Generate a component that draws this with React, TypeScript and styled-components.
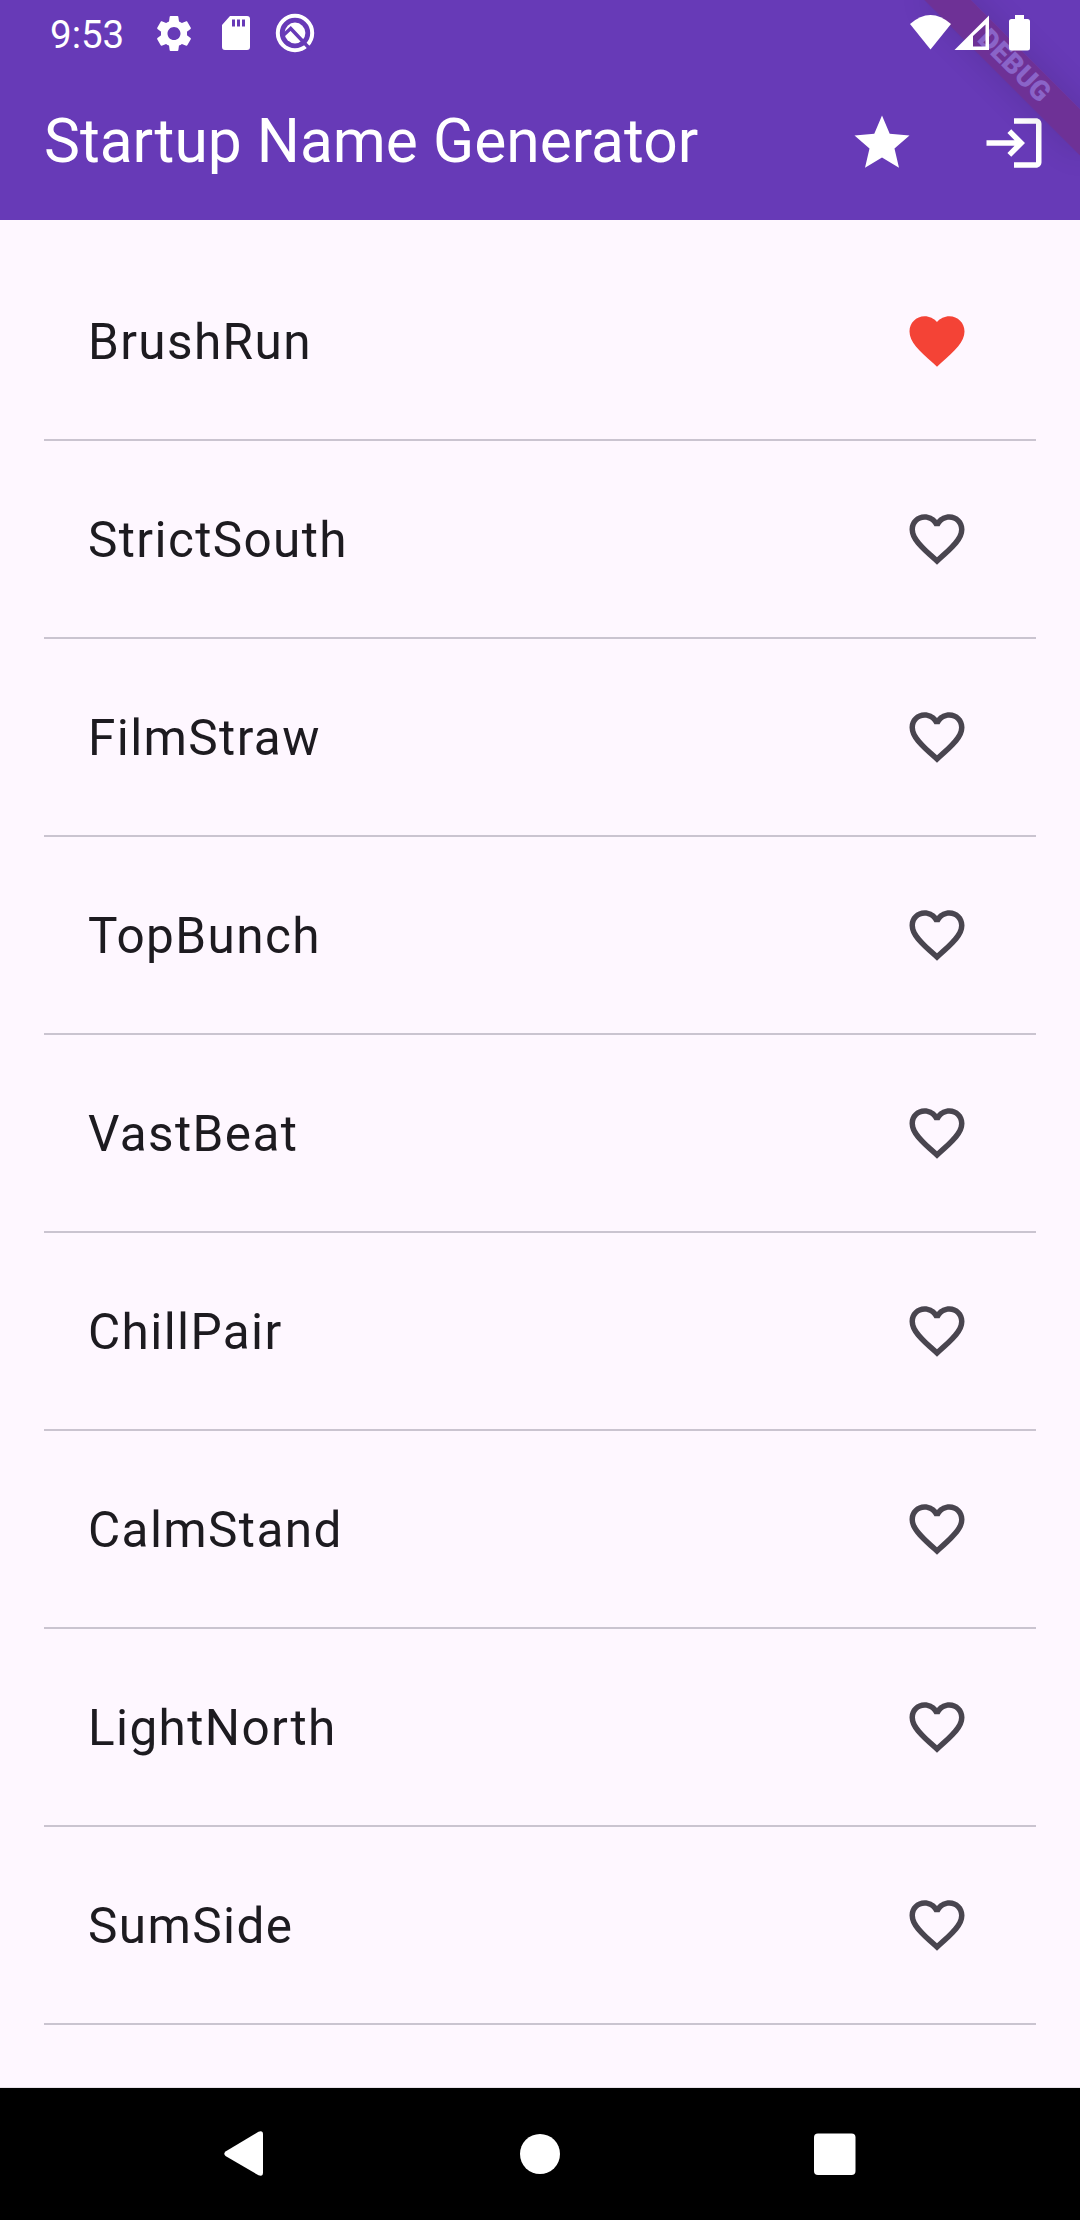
import React from "react";
import styled, { createGlobalStyle } from "styled-components";

const GlobalStyle = createGlobalStyle`
  * { box-sizing: border-box; }
  html, body { margin: 0; padding: 0; background: #fef7ff; }
  body { font-family: Roboto, "Noto Sans", sans-serif; font-kerning: normal; }
`;

const Screen = styled.div`
  position: relative;
  display: flex;
  flex-direction: column;
  width: 1080px;
  height: 2220px;
  overflow: hidden;
  background: #fef7ff;
`;

const Header = styled.header`
  background: #673ab7;
  color: #fff;
  height: 220px;
  flex: none;
`;

const StatusBar = styled.div`
  position: relative;
  z-index: 2;
  display: flex;
  align-items: center;
  justify-content: space-between;
  height: 66px;
  padding: 0 49px 0 50px;
`;

const StatusGroup = styled.div<{ $gap: number }>`
  display: flex;
  align-items: center;
  gap: ${(p) => p.$gap}px;
`;

const Clock = styled.span`
  font-size: 38.5px;
  line-height: 64px;
  width: 75px;
  margin-right: 13px;
  padding-top: 4px;
`;

const Glyph = styled.svg`
  display: block;
  flex: none;
`;

const AppBar = styled.div`
  display: flex;
  align-items: center;
  height: 154px;
  padding: 0 33px 0 44px;
`;

const Title = styled.h1`
  flex: 1;
  margin: 0;
  padding-bottom: 4px;
  font-size: 60.5px;
  font-weight: 400;
  line-height: 77px;
  white-space: nowrap;
`;

const Actions = styled.div`
  display: flex;
  gap: 66px;
`;

const Banner = styled.div`
  position: absolute;
  z-index: 1;
  top: 0;
  left: 1080px;
  width: 0;
  height: 0;
  transform: rotate(45deg);
`;

const BannerStrip = styled.div`
  position: absolute;
  left: -110px;
  top: 77px;
  width: 220px;
  height: 33px;
  background: rgba(128, 28, 64, 0.28);
  box-shadow: 0 0 33px rgba(0, 0, 0, 0.12);
  color: #8a64c8;
  font-size: 28px;
  font-weight: 900;
  line-height: 32px;
  text-align: center;
`;

const List = styled.ul`
  flex: 1;
  margin: 0;
  padding: 44px 44px 0;
  list-style: none;
`;

const Row = styled.li`
  display: flex;
  align-items: center;
  justify-content: space-between;
  height: 154px;
  padding: 0 66px 0 44px;
`;

const Divider = styled.li`
  height: 44px;
  padding-top: 21px;
  &::before {
    content: "";
    display: block;
    height: 2px;
    background: #cac4d0;
  }
`;

const Name = styled.span`
  padding-top: 2px;
  font-size: 49.5px;
  line-height: 74px;
  letter-spacing: 1.375px;
  color: #1d1b20;
`;

const NavBar = styled.nav`
  flex: none;
  display: flex;
  align-items: center;
  justify-content: space-between;
  height: 133px;
  padding: 0 224px;
  border-top: 1px solid #e8e2ea;
  background: #000;
`;

const HEART =
  "M12 21.35l-1.45-1.32C5.4 15.36 2 12.28 2 8.5 2 5.42 4.42 3 7.5 3c1.74 0 3.41.81 4.5 2.09C13.09 3.81 14.76 3 16.5 3 19.58 3 22 5.42 22 8.5c0 3.78-3.4 6.86-8.55 11.54L12 21.35z";
const HEART_OUTLINE =
  "M16.5 3c-1.74 0-3.41.81-4.5 2.09C10.91 3.81 9.24 3 7.5 3 4.42 3 2 5.42 2 8.5c0 3.78 3.4 6.86 8.55 11.54L12 21.35l1.45-1.32C18.6 15.36 22 12.28 22 8.5 22 5.42 19.58 3 16.5 3zm-4.4 15.55l-.1.1-.1-.1C7.14 14.24 4 11.39 4 8.5 4 6.5 5.5 5 7.5 5c1.54 0 3.04.99 3.57 2.36h1.87C13.46 5.99 14.96 5 16.5 5c2 0 3.5 1.5 3.5 3.5 0 2.89-3.14 5.74-7.9 10.05z";
const STAR =
  "M12 17.27L18.18 21l-1.64-7.03L22 9.24l-7.19-.61L12 2 9.19 8.63 2 9.24l5.46 4.73L5.82 21z";
const LOGIN =
  "M11 7L9.6 8.4l2.6 2.6H2v2h10.2l-2.6 2.6L11 17l5-5-5-5zm9 12h-8v2h8c1.1 0 2-.9 2-2V5c0-1.1-.9-2-2-2h-8v2h8v14z";
const GEAR =
  "M19.14 12.94c.04-.3.06-.61.06-.94 0-.32-.02-.64-.07-.94l2.03-1.58c.18-.14.23-.41.12-.61l-1.92-3.32c-.12-.22-.37-.29-.59-.22l-2.39.96c-.5-.38-1.03-.7-1.62-.94l-.36-2.54c-.04-.24-.24-.41-.48-.41h-3.84c-.24 0-.43.17-.47.41l-.36 2.54c-.59.24-1.13.57-1.62.94l-2.39-.96c-.22-.08-.47 0-.59.22L2.74 8.87c-.12.21-.08.47.12.61l2.03 1.58c-.05.3-.09.63-.09.94s.02.64.07.94l-2.03 1.58c-.18.14-.23.41-.12.61l1.92 3.32c.12.22.37.29.59.22l2.39-.96c.5.38 1.03.7 1.62.94l.36 2.54c.05.24.24.41.48.41h3.84c.24 0 .44-.17.47-.41l.36-2.54c.59-.24 1.13-.56 1.62-.94l2.39.96c.22.08.47 0 .59-.22l1.92-3.32c.12-.22.07-.47-.12-.61l-2.01-1.58zM12 15.6c-1.98 0-3.6-1.62-3.6-3.6s1.62-3.6 3.6-3.6 3.6 1.62 3.6 3.6-1.62 3.6-3.6 3.6z";

const MaterialIcon = ({ d, color = "#fff" }: { d: string; color?: string }) => (
  <Glyph width="66" height="66" viewBox="0 0 24 24" fill={color}>
    <path d={d} />
  </Glyph>
);

const names = [
  "BrushRun",
  "StrictSouth",
  "FilmStraw",
  "TopBunch",
  "VastBeat",
  "ChillPair",
  "CalmStand",
  "LightNorth",
  "SumSide",
];

export default function App() {
  const saved = new Set(["BrushRun"]);
  return (
    <Screen>
      <GlobalStyle />
      <Header>
        <StatusBar>
          <StatusGroup $gap={19}>
            <Clock>9:53</Clock>
            <Glyph width="34" height="35" viewBox="2.6 2.4 18.8 19.2" preserveAspectRatio="none" fill="#fff">
              <path d={GEAR} />
            </Glyph>
            <Glyph width="46" height="36" viewBox="0 0 46 36" fill="#fff">
              <path
                fillRule="evenodd"
                d="M20 1H37a3 3 0 0 1 3 3V32a3 3 0 0 1-3 3H15a3 3 0 0 1-3-3V10zM22 4.500V11.500H25V4.500zM27 4.500V11.500H30V4.500zM32 4.500V11.500H35V4.500z"
              />
            </Glyph>
            <Glyph width="40" height="40" viewBox="0 0 40 40">
              <circle cx="20" cy="20" r="17.200" fill="none" stroke="#fff" strokeWidth="4" />
              <circle cx="20" cy="20" r="10.400" fill="#fff" />
              <path d="M7 23.500L15.700 15.500L36 37" fill="none" stroke="#673ab7" strokeWidth="3.400" />
            </Glyph>
          </StatusGroup>
          <Glyph width="121" height="40" viewBox="0 0 121 40" fill="#fff">
            <path d="M0 11Q20.500 -7 41 11L20.500 36.500Z" />
            <path fillRule="evenodd" d="M44.500 37L79 2.500V37ZM63 33.500H75.500V11.500L63 23Z" />
            <path d="M105 2h9v4h3.500a2.500 2.500 0 0 1 2.500 2.500V35a2.500 2.500 0 0 1-2.500 2.500H101.500a2.500 2.500 0 0 1-2.500-2.500V8.500a2.500 2.500 0 0 1 2.500-2.500H105z" />
          </Glyph>
        </StatusBar>
        <AppBar>
          <Title>Startup Name Generator</Title>
          <Actions>
            <MaterialIcon d={STAR} />
            <MaterialIcon d={LOGIN} />
          </Actions>
        </AppBar>
      </Header>
      <Banner>
        <BannerStrip>DEBUG</BannerStrip>
      </Banner>
      <List>
        {names.map((name) => (
          <React.Fragment key={name}>
            <Row>
              <Name>{name}</Name>
              {saved.has(name) ? (
                <MaterialIcon d={HEART} color="#f44336" />
              ) : (
                <MaterialIcon d={HEART_OUTLINE} color="#49454f" />
              )}
            </Row>
            <Divider />
          </React.Fragment>
        ))}
      </List>
      <NavBar>
        <Glyph width="42" height="46" viewBox="0 0 42 46" fill="#fff">
          <path d="M1.500 20.500L34.500 0.700Q39 -1 39 3.500V41.500Q39 46 34.500 44.300L1.500 25Q-1 22.800 1.500 20.500Z" />
        </Glyph>
        <Glyph width="40" height="40" viewBox="0 0 40 40" fill="#fff">
          <circle cx="20" cy="20" r="20" />
        </Glyph>
        <Glyph width="42" height="42" viewBox="0 0 42 42" fill="#fff">
          <rect y="0.500" width="41.500" height="41.500" rx="4" />
        </Glyph>
      </NavBar>
    </Screen>
  );
}
